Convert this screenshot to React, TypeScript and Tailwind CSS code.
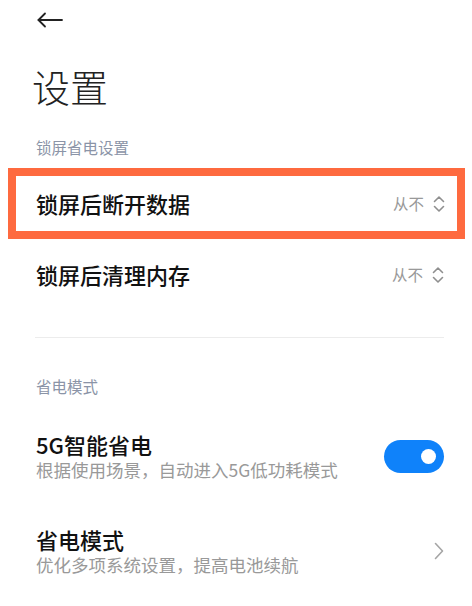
import React from 'react';

const font = { fontFamily: '"Noto Sans CJK SC", "Noto Sans", sans-serif' };

const UpDown = () => (
  <svg width="12" height="18" viewBox="0 0 12 18" fill="none" stroke="#8f8f8f" strokeWidth="1.6" strokeLinecap="round" strokeLinejoin="round">
    <path d="M1.5 6.5 L6 2 L10.5 6.5" />
    <path d="M1.5 11.5 L6 16 L10.5 11.5" />
  </svg>
);

const SelectRow = ({ title, boxed }: { title: string; boxed?: boolean }) => (
  <div
    className={
      boxed
        ? 'ml-2 mr-[7px] h-[71px] border-8 border-[#fe6a3f] pl-5 pr-3 flex items-center justify-between'
        : 'h-[71px] pl-9 pr-7 flex items-center justify-between'
    }
  >
    <span className="text-[22px] font-medium text-[#111]">{title}</span>
    <span className="flex items-center gap-[9px]">
      <span className="text-[15.5px] text-[#999]">从不</span>
      <UpDown />
    </span>
  </div>
);

export default function App() {
  return (
    <div className="w-[472px] h-[606px] bg-white overflow-hidden flex flex-col" style={font}>
      <div className="h-10 px-9 flex items-center">
        <svg width="28" height="16" viewBox="0 0 28 16" fill="none" stroke="#222" strokeWidth="1.8" strokeLinecap="round" strokeLinejoin="round">
          <path d="M26 8 H2.5" />
          <path d="M9 1.5 L2.5 8 L9 14.5" />
        </svg>
      </div>
      <h1 className="mt-6 h-[44px] px-8 text-[38px] leading-[44px] font-light text-[#222]">设置</h1>
      <div className="mt-[29px] h-5 px-9 text-[15.5px] leading-5 text-[#8b94a7]">锁屏省电设置</div>
      <div className="mt-[11px]">
        <SelectRow title="锁屏后断开数据" boxed />
        <SelectRow title="锁屏后清理内存" />
      </div>
      <div className="ml-[35px] mr-7 mt-[27px] border-t border-[#ececec]" />
      <div className="mt-[38px] h-5 px-9 text-[15.5px] leading-5 text-[#8b94a7]">省电模式</div>
      <div className="mt-9 pl-9 pr-7 flex items-center justify-between">
        <div className="flex flex-col gap-1">
          <span className="text-[22px] leading-6 font-medium text-[#111]">5G智能省电</span>
          <span className="text-[17.5px] leading-5 text-[#999]">根据使用场景，自动进入5G低功耗模式</span>
        </div>
        <div className="w-[60px] h-[33px] rounded-full bg-[#0f82fa] flex items-center justify-end pr-2">
          <div className="w-[15px] h-[15px] rounded-full bg-white" />
        </div>
      </div>
      <div className="mt-[47px] pl-9 pr-7 flex items-center justify-between">
        <div className="flex flex-col gap-1">
          <span className="text-[22px] leading-6 font-medium text-[#111]">省电模式</span>
          <span className="text-[17.5px] leading-5 text-[#999]">优化多项系统设置，提高电池续航</span>
        </div>
        <svg width="10" height="18" viewBox="0 0 10 18" fill="none" stroke="#a5a5a5" strokeWidth="1.6" strokeLinecap="round" strokeLinejoin="round">
          <path d="M1.5 1.5 L8.5 9 L1.5 16.5" />
        </svg>
      </div>
    </div>
  );
}
